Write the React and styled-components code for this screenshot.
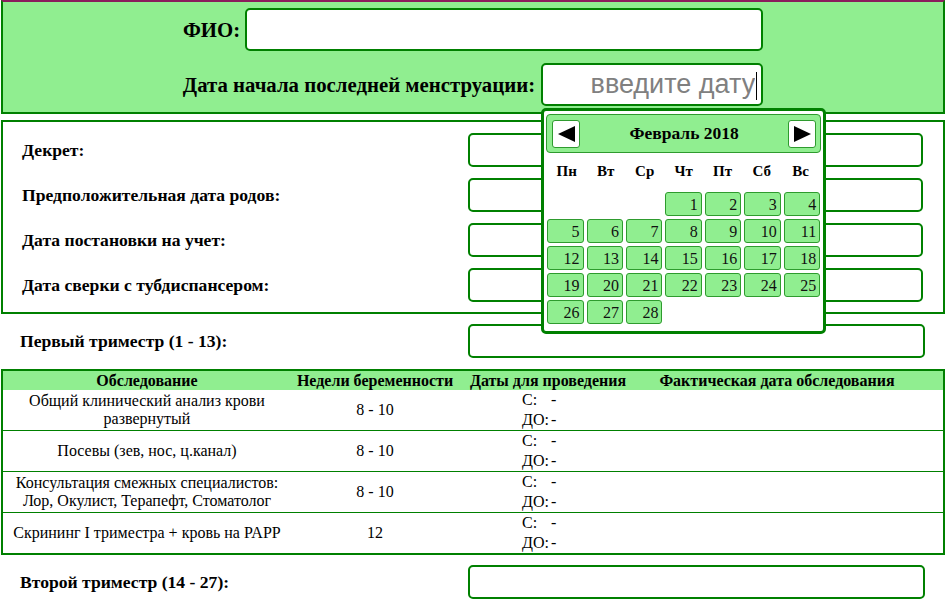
import React from 'react';
import styled, { createGlobalStyle } from 'styled-components';

const GlobalStyle = createGlobalStyle`
  body {
    margin: 0;
    font-family: "Liberation Serif", "Times New Roman", serif;
    color: #000;
    background: #fff;
  }
`;

const Page = styled.div`
  width: 946px;
`;

const Header = styled.header`
  margin: 0 1px;
  background: #90ee90;
  border: 2px solid #008000;
  border-top-color: #8b1c5c;
  padding: 6px 0;
  display: flex;
  flex-direction: column;
  align-items: center;
  gap: 12px;
`;

const HeaderRow = styled.div`
  display: flex;
  align-items: center;
  gap: ${(p) => p.$gap || 5}px;
`;

const HeaderLabel = styled.label`
  font-weight: bold;
  font-size: 20.8px;
`;

const BigInput = styled.input`
  box-sizing: border-box;
  width: ${(p) => p.$width}px;
  height: 43px;
  border: 2px solid #008000;
  border-radius: 5px;
  background: #fff;
  outline: none;
  padding: 0 6px;
  font-family: "Liberation Sans", Arial, sans-serif;
  font-size: 27px;
  text-align: ${(p) => (p.$right ? 'right' : 'left')};
  &::placeholder {
    color: #808080;
  }
`;

const DateWrap = styled.div`
  position: relative;
`;

const Caret = styled.span`
  position: absolute;
  right: 6px;
  top: 9px;
  width: 1px;
  height: 28px;
  background: #000;
`;

const Popup = styled.div`
  position: absolute;
  top: calc(100% + 2px);
  left: 0;
  z-index: 10;
  box-sizing: border-box;
  width: 285px;
  height: 226px;
  background: #fff;
  border: 3px solid #008000;
  border-radius: 5px;
  padding: 3px 2px;
`;

const CalHead = styled.div`
  box-sizing: border-box;
  height: 39px;
  background: #90ee90;
  border: 1px solid #2e9b2e;
  border-radius: 4px;
  display: flex;
  align-items: center;
  justify-content: space-between;
  padding: 0 4px 0 5px;
`;

const NavButton = styled.button`
  box-sizing: border-box;
  width: 28px;
  height: 28px;
  padding: 0;
  background: #fff;
  border: 1px solid #2e9b2e;
  border-radius: 3px;
  display: flex;
  align-items: center;
  justify-content: center;
`;

const MonthTitle = styled.span`
  font-weight: bold;
  font-size: 17.5px;
`;

const Weekdays = styled.div`
  display: grid;
  grid-template-columns: repeat(7, 1fr);
  height: 36px;
  align-items: center;
  margin-bottom: 3px;
  padding: 0 1px;
`;

const Weekday = styled.span`
  text-align: center;
  font-weight: bold;
  font-size: 15px;
`;

const Days = styled.div`
  display: grid;
  grid-template-columns: repeat(7, 1fr);
  column-gap: 3px;
  row-gap: 3px;
  padding: 0 1px;
`;

const Day = styled.div`
  box-sizing: border-box;
  height: 24px;
  background: ${(p) => (p.$empty ? 'transparent' : '#90ee90')};
  border: 1px solid ${(p) => (p.$empty ? 'transparent' : '#2e9b2e')};
  border-radius: 3px;
  text-align: right;
  padding-right: 3px;
  font-size: 16px;
  line-height: 23px;
  color: #111;
`;

const InfoBox = styled.section`
  margin: 6px 1px 0;
  border: 2px solid #008000;
  padding: 11px 20px 10px 19px;
  display: flex;
  flex-direction: column;
  gap: 11px;
`;

const FieldRow = styled.div`
  display: grid;
  grid-template-columns: 1fr 455px;
  align-items: center;
`;

const FieldLabel = styled.label`
  font-weight: bold;
  font-size: 17.6px;
`;

const Field = styled.input`
  box-sizing: border-box;
  width: 100%;
  height: 34px;
  border: 2px solid #008000;
  border-radius: 5px;
  background: #fff;
  outline: none;
`;

const TrimesterRow = styled.div`
  display: grid;
  grid-template-columns: 1fr 457px;
  align-items: center;
  padding: 10px 21px 0 20px;
`;

const Table = styled.div`
  margin: 11px 1px 0;
  border: 2px solid #008000;
`;

const TRow = styled.div`
  display: grid;
  grid-template-columns: 288px 168px 178px 280px 1fr;
  align-items: center;
  background: ${(p) => (p.$head ? '#90ee90' : '#fff')};
  border-top: ${(p) => (p.$line ? '1px solid #008000' : 'none')};
  min-height: ${(p) => (p.$head ? 19 : 40)}px;
`;

const Th = styled.div`
  text-align: center;
  font-weight: bold;
  font-size: 16px;
  line-height: 19px;
`;

const Td = styled.div`
  text-align: center;
  font-size: 16px;
  line-height: 18px;
  padding: 0 4px;
`;

const Range = styled.div`
  display: grid;
  grid-template-columns: auto auto;
  justify-content: start;
  column-gap: 2px;
  padding-left: 63px;
  font-size: 16px;
  line-height: 20px;
`;

const Arrow = ({ dir }) => (
  <svg width="17" height="16" viewBox="0 0 17 16">
    {dir === 'left' ? <polygon points="17,0 17,16 0,8" fill="#000" /> : <polygon points="0,0 0,16 17,8" fill="#000" />}
  </svg>
);

const weekdays = ['Пн', 'Вт', 'Ср', 'Чт', 'Пт', 'Сб', 'Вс'];
const days = [null, null, null, ...Array.from({ length: 28 }, (_, i) => i + 1)];

const exams = [
  { name: 'Общий клинический анализ крови развернутый', weeks: '8 - 10' },
  { name: 'Посевы (зев, нос, ц.канал)', weeks: '8 - 10' },
  { name: 'Консультация смежных специалистов: Лор, Окулист, Терапефт, Стоматолог', weeks: '8 - 10' },
  { name: 'Скрининг I триместра + кровь на PAPP', weeks: '12' },
];

const fields = ['Декрет:', 'Предположительная дата родов:', 'Дата постановки на учет:', 'Дата сверки с тубдиспансером:'];

function App() {
  return (
    <Page>
      <GlobalStyle />
      <Header>
        <HeaderRow $gap={5}>
          <HeaderLabel>ФИО:</HeaderLabel>
          <BigInput $width={518} />
        </HeaderRow>
        <HeaderRow $gap={6}>
          <HeaderLabel>Дата начала последней менструации:</HeaderLabel>
          <DateWrap>
            <BigInput $width={222} $right placeholder="введите дату" />
            <Caret />
            <Popup>
              <CalHead>
                <NavButton><Arrow dir="left" /></NavButton>
                <MonthTitle>Февраль 2018</MonthTitle>
                <NavButton><Arrow dir="right" /></NavButton>
              </CalHead>
              <Weekdays>
                {weekdays.map((w) => (
                  <Weekday key={w}>{w}</Weekday>
                ))}
              </Weekdays>
              <Days>
                {days.map((d, i) => (
                  <Day key={i} $empty={!d}>{d}</Day>
                ))}
              </Days>
            </Popup>
          </DateWrap>
        </HeaderRow>
      </Header>

      <InfoBox>
        {fields.map((f) => (
          <FieldRow key={f}>
            <FieldLabel>{f}</FieldLabel>
            <Field />
          </FieldRow>
        ))}
      </InfoBox>

      <TrimesterRow>
        <FieldLabel>Первый триместр (1 - 13):</FieldLabel>
        <Field />
      </TrimesterRow>

      <Table>
        <TRow $head>
          <Th>Обследование</Th>
          <Th>Недели беременности</Th>
          <Th>Даты для проведения</Th>
          <Th>Фактическая дата обследования</Th>
          <Th />
        </TRow>
        {exams.map((e, i) => (
          <TRow key={e.name} $line={i > 0}>
            <Td>{e.name}</Td>
            <Td>{e.weeks}</Td>
            <Range>
              <span>С:</span>
              <span>-</span>
              <span>ДО:</span>
              <span>-</span>
            </Range>
            <Td />
            <Td />
          </TRow>
        ))}
      </Table>

      <TrimesterRow>
        <FieldLabel>Второй триместр (14 - 27):</FieldLabel>
        <Field />
      </TrimesterRow>
    </Page>
  );
}

export default App;
